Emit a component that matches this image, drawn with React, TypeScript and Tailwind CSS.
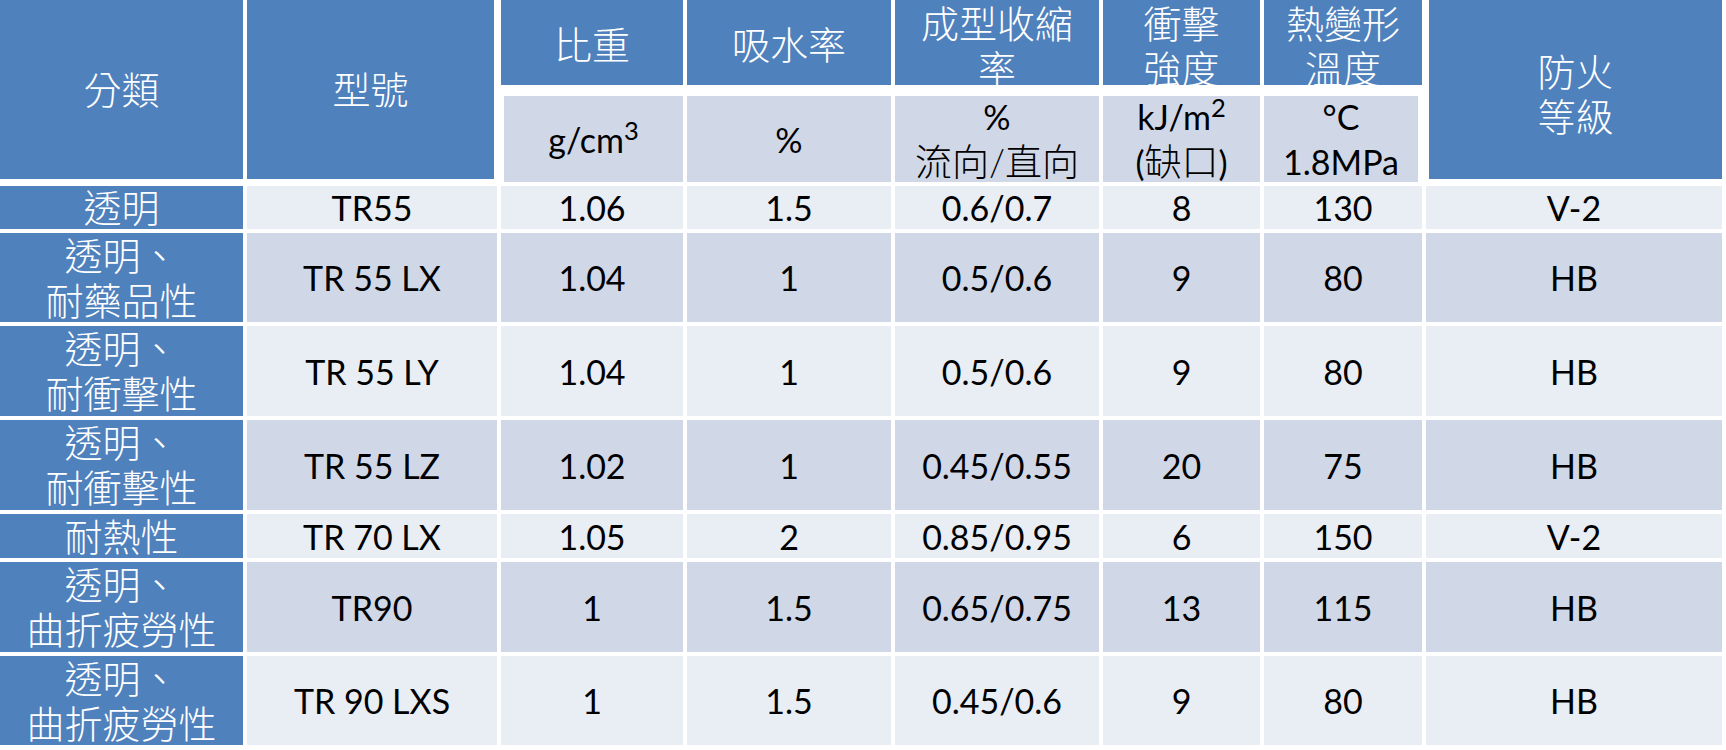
const BLUE = "bg-[#4f81bd]";
const DARK = "bg-[#d0d8e8]";
const LIGHT = "bg-[#e9edf4]";

type Row = {
  cat: string[];
  model: string;
  sg: string;
  wa: string;
  shrink: string;
  impact: string;
  hdt: string;
  fire: string;
};

const rows: Row[] = [
  { cat: ["透明"], model: "TR55", sg: "1.06", wa: "1.5", shrink: "0.6/0.7", impact: "8", hdt: "130", fire: "V-2" },
  { cat: ["透明、", "耐藥品性"], model: "TR 55 LX", sg: "1.04", wa: "1", shrink: "0.5/0.6", impact: "9", hdt: "80", fire: "HB" },
  { cat: ["透明、", "耐衝擊性"], model: "TR 55 LY", sg: "1.04", wa: "1", shrink: "0.5/0.6", impact: "9", hdt: "80", fire: "HB" },
  { cat: ["透明、", "耐衝擊性"], model: "TR 55 LZ", sg: "1.02", wa: "1", shrink: "0.45/0.55", impact: "20", hdt: "75", fire: "HB" },
  { cat: ["耐熱性"], model: "TR 70 LX", sg: "1.05", wa: "2", shrink: "0.85/0.95", impact: "6", hdt: "150", fire: "V-2" },
  { cat: ["透明、", "曲折疲勞性"], model: "TR90", sg: "1", wa: "1.5", shrink: "0.65/0.75", impact: "13", hdt: "115", fire: "HB" },
  { cat: ["透明、", "曲折疲勞性"], model: "TR 90 LXS", sg: "1", wa: "1.5", shrink: "0.45/0.6", impact: "9", hdt: "80", fire: "HB" },
];

// CJK words inside a latin line, a touch larger than the figures
function Zh({ children }: { children: React.ReactNode }) {
  return <span className="text-[37px] font-light leading-[45px]">{children}</span>;
}

function Lines({ lines, className = "" }: { lines: React.ReactNode[]; className?: string }) {
  return (
    <div className={`flex flex-col items-center leading-[45px] whitespace-nowrap ${className}`}>
      {lines.map((l, i) => (
        <div key={i} className="h-[45px]">
          {l}
        </div>
      ))}
    </div>
  );
}

function BlueCell({ lines, className = "" }: { lines: string[]; className?: string }) {
  return (
    <div className={`${BLUE} text-white flex items-center justify-center overflow-hidden ${className}`}>
      <Lines lines={lines} className="text-[38px] font-light" />
    </div>
  );
}

function SubCell({ lines, className = "" }: { lines: React.ReactNode[]; className?: string }) {
  return (
    <div className={`${DARK} text-black mt-[7px] flex items-center justify-center overflow-hidden ${className}`}>
      <Lines lines={lines} className="text-[34px]" />
    </div>
  );
}

export default function App() {
  return (
    <div
      className="w-[1726px] h-[750px] bg-white overflow-hidden"
      style={{ fontFamily: '"Lato", "Noto Sans CJK TC", sans-serif' }}
    >
      <div className="grid grid-cols-[243px_250px_182px_204px_204px_157px_158px_296px] grid-rows-[85px_93px_43px_89px_90px_90px_44px_90px_89px] gap-[4px]">
        {/* header */}
        <BlueCell lines={["分類"]} className="row-span-2 self-start h-[179px]" />
        <BlueCell lines={["型號"]} className="row-span-2 self-start h-[179px] mr-[3px]" />
        <BlueCell lines={["比重"]} className="pt-[4px]" />
        <BlueCell lines={["吸水率"]} className="pt-[4px]" />
        <BlueCell lines={["成型收縮", "率"]} className="pt-[6px]" />
        <BlueCell lines={["衝擊", "強度"]} className="pt-[6px]" />
        <BlueCell lines={["熱變形", "溫度"]} className="pt-[6px]" />
        <BlueCell lines={["防火", "等級"]} className="row-span-2 self-start h-[179px] ml-[3px] pt-[8px]" />

        <SubCell
          className="ml-[3px]"
          lines={[
            <span>
              g/cm<sup>3</sup>
            </span>,
          ]}
        />
        <SubCell lines={["%"]} />
        <SubCell lines={["%", <Zh>流向/直向</Zh>]} />
        <SubCell
          lines={[
            <span>
              kJ/m<sup>2</sup>
            </span>,
            <span>
              (<Zh>缺口</Zh>)
            </span>,
          ]}
        />
        <SubCell className="mr-[4px]" lines={["°C", "1.8MPa"]} />

        {/* data rows */}
        {rows.map((r, i) => {
          const bg = i % 2 === 0 ? LIGHT : DARK;
          const cells = [r.model, r.sg, r.wa, r.shrink, r.impact, r.hdt, r.fire];
          return [
            <BlueCell key={`c${i}`} lines={r.cat} />,
            ...cells.map((c, j) => (
              <div
                key={`d${i}-${j}`}
                className={`${bg} text-black text-[34px] flex items-center justify-center overflow-hidden whitespace-nowrap`}
              >
                {c}
              </div>
            )),
          ];
        })}
      </div>
    </div>
  );
}
